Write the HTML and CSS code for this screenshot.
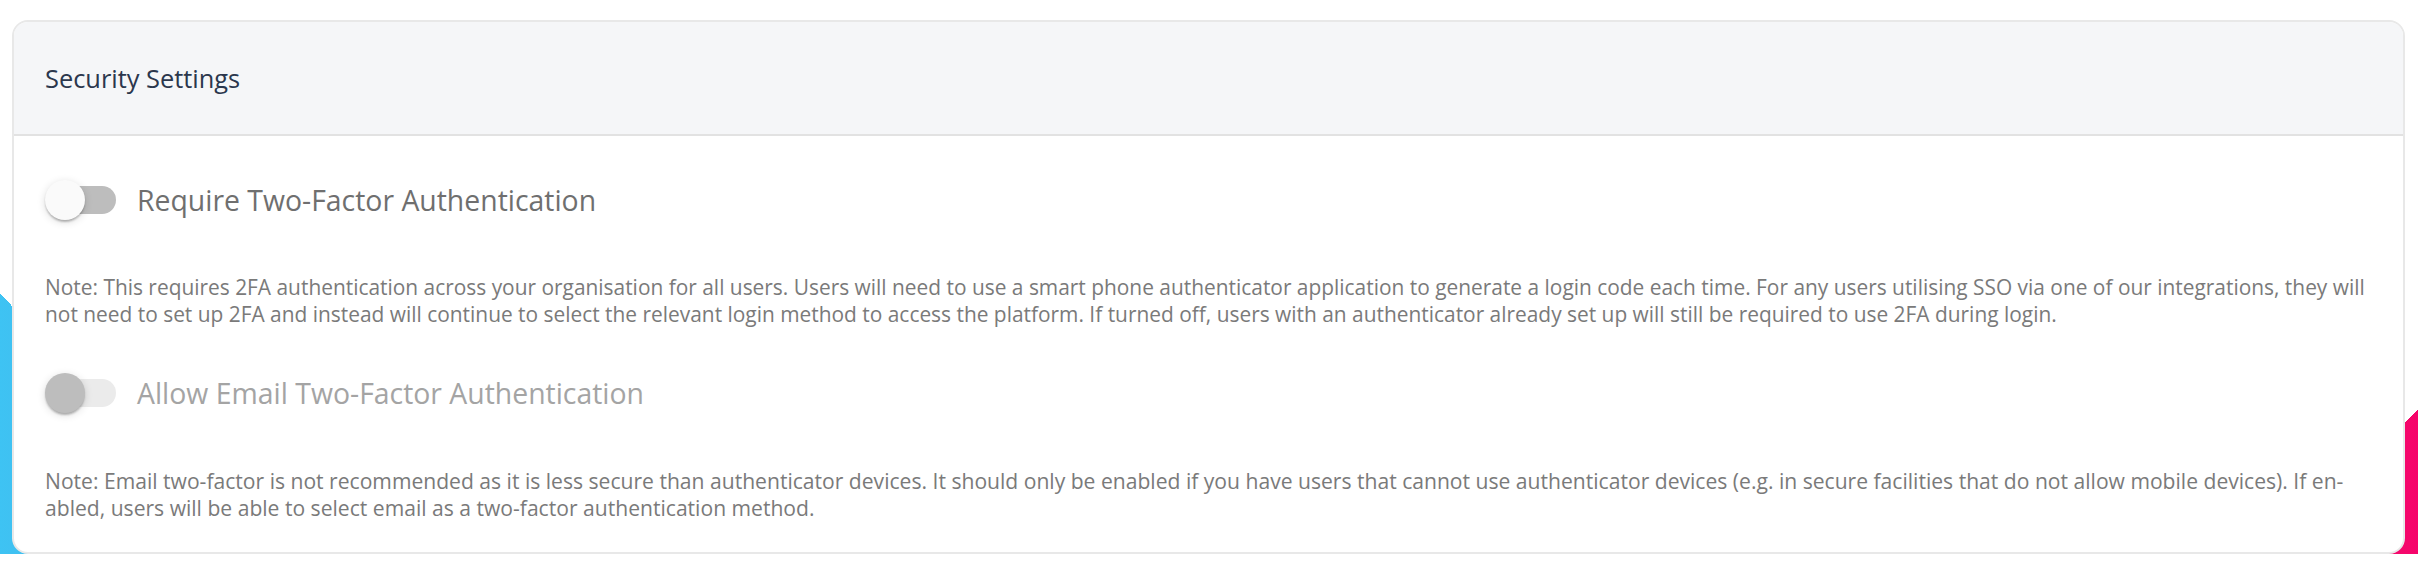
FILE: index.html
```html
<!DOCTYPE html>
<html lang="en">
<head>
<meta charset="utf-8">
<title>Security Settings</title>
<link rel="stylesheet" href="styles.css">
</head>
<body>
<main class="page">
  <section class="card">
    <header class="card-header">
      <h2 class="card-title">Security Settings</h2>
    </header>
    <div class="card-body">
      <div class="setting">
        <label class="switch-row">
          <span class="switch">
            <span class="track"></span>
            <span class="thumb"></span>
          </span>
          <span class="switch-label">Require Two-Factor Authentication</span>
        </label>
        <p class="note">Note: This requires 2FA authentication across your organisation for all users. Users will need to use a smart phone authenticator application to generate a login code each time. For any users utilising SSO via one of our integrations, they will not need to set up 2FA and instead will continue to select the relevant login method to access the platform. If turned off, users with an authenticator already set up will still be required to use 2FA during login.</p>
      </div>
      <div class="setting">
        <label class="switch-row is-disabled">
          <span class="switch">
            <span class="track"></span>
            <span class="thumb"></span>
          </span>
          <span class="switch-label">Allow Email Two-Factor Authentication</span>
        </label>
        <p class="note note-email">Note: Email two-factor is not recommended as it is less secure than authenticator devices. It should only be enabled if you have users that cannot use authenticator devices (e.g. in secure facilities that do not allow mobile devices). If en&shy;abled, users will be able to select email as a two-factor authentication method.</p>
      </div>
    </div>
  </section>
</main>
</body>
</html>
```
FILE: styles.css
```css
html {
  background:
    linear-gradient(to bottom left, #fff 50%, rgba(255,255,255,0) 50%) left bottom / 240px 261px no-repeat,
    linear-gradient(to right, #3ec3f3, #52a4de) left bottom / 240px 261px no-repeat,
    linear-gradient(to bottom right, #fff 50%, rgba(255,255,255,0) 50%) right bottom / 155px 144px no-repeat,
    linear-gradient(to right, #e8247c, #f6046a) right bottom / 155px 144px no-repeat,
    #fff;
}

body {
  margin: 0;
  font-family: "Open Sans", "Noto Sans", "Liberation Sans", sans-serif;
}

.page {
  padding: 20px 13px 0 12px;
}

.card {
  background: #fff;
  border: 2px solid #e8e8e8;
  border-radius: 16px;
  overflow: hidden;
}

.card-header {
  background: #f5f6f8;
  border-bottom: 2px solid #e2e2e2;
  height: 112px;
  display: flex;
  align-items: center;
  padding: 0 31px;
}

.card-title {
  margin: 0;
  font-size: 25.4px;
  font-weight: 400;
  color: #2b374d;
}

.card-body {
  padding: 36px 26px 31px 31px;
}

.switch-row {
  display: flex;
  align-items: center;
  gap: 20px;
  height: 56px;
}

.switch {
  display: grid;
  align-items: center;
  width: 72px;
}

.track,
.thumb {
  grid-area: 1 / 1;
}

.track {
  margin-left: 5px;
  width: 66px;
  height: 28px;
  border-radius: 14px;
  background: #bdbdbd;
}

.thumb {
  width: 40px;
  height: 40px;
  border-radius: 50%;
  background: #fafafa;
  box-shadow: 0 3px 3px -2px rgba(0,0,0,0.2), 0 2px 2px rgba(0,0,0,0.14), 0 2px 8px rgba(0,0,0,0.14);
}

.switch-label {
  font-size: 28.4px;
  color: #6f6f6f;
}

.is-disabled .track {
  background: #ebebeb;
}

.is-disabled .thumb {
  background: #bdbdbd;
}

.is-disabled .switch-label {
  color: #a4a4a4;
}

.note {
  margin: 46px 0 37px;
  font-size: 20.9px;
  line-height: 27px;
  color: #7a7a7a;
}

.note-email {
  font-size: 21.1px;
}

.setting:last-child .note {
  margin-bottom: 0;
}
```
